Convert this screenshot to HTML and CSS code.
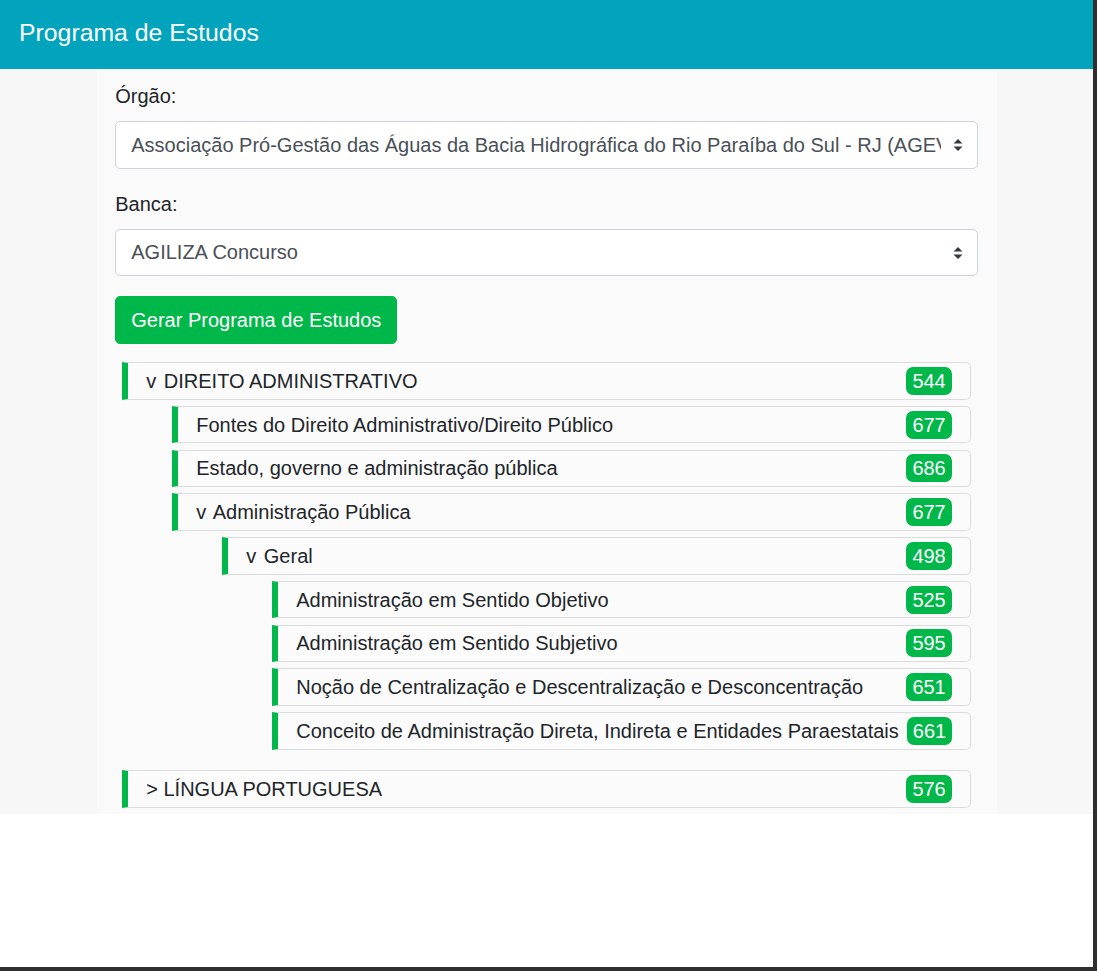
FILE: index.html
```html
<!DOCTYPE html>
<html lang="pt-BR">
<head>
<meta charset="utf-8">
<title>Programa de Estudos</title>
<link rel="stylesheet" href="styles.css">
</head>
<body>
<div class="page">
  <header class="topbar">
    <h1 class="brand">Programa de Estudos</h1>
  </header>
  <main class="section">
    <div class="container">
      <div class="form-group">
        <label class="label" for="orgao">Órgão:</label>
        <div class="select-wrap">
          <select id="orgao" class="select">
            <option>Associação Pró-Gestão das Águas da Bacia Hidrográfica do Rio Paraíba do Sul - RJ (AGEVAP)</option>
          </select>
          <svg class="select-arrow" width="10" height="14" viewBox="0 0 10 14"><path d="M5 1 L9.5 5.5 H0.5 Z M5 13 L9.5 8.5 H0.5 Z" fill="#343a40"/></svg>
        </div>
      </div>
      <div class="form-group">
        <label class="label" for="banca">Banca:</label>
        <div class="select-wrap">
          <select id="banca" class="select">
            <option>AGILIZA Concurso</option>
          </select>
          <svg class="select-arrow" width="10" height="14" viewBox="0 0 10 14"><path d="M5 1 L9.5 5.5 H0.5 Z M5 13 L9.5 8.5 H0.5 Z" fill="#343a40"/></svg>
        </div>
      </div>
      <button class="btn" type="button">Gerar Programa de Estudos</button>

      <div class="tree">
        <div class="group">
          <div class="item"><span class="item-text"><span class="chev">v</span> DIREITO ADMINISTRATIVO</span><span class="badge">544</span></div>
          <div class="children">
            <div class="item"><span class="item-text">Fontes do Direito Administrativo/Direito Público</span><span class="badge">677</span></div>
            <div class="item"><span class="item-text">Estado, governo e administração pública</span><span class="badge">686</span></div>
            <div class="item"><span class="item-text"><span class="chev">v</span> Administração Pública</span><span class="badge">677</span></div>
            <div class="children">
              <div class="item"><span class="item-text"><span class="chev">v</span> Geral</span><span class="badge">498</span></div>
              <div class="children">
                <div class="item"><span class="item-text">Administração em Sentido Objetivo</span><span class="badge">525</span></div>
                <div class="item"><span class="item-text">Administração em Sentido Subjetivo</span><span class="badge">595</span></div>
                <div class="item"><span class="item-text">Noção de Centralização e Descentralização e Desconcentração</span><span class="badge">651</span></div>
                <div class="item"><span class="item-text">Conceito de Administração Direta, Indireta e Entidades Paraestatais</span><span class="badge">661</span></div>
              </div>
            </div>
          </div>
        </div>
        <div class="group">
          <div class="item"><span class="item-text">&gt; LÍNGUA PORTUGUESA</span><span class="badge">576</span></div>
        </div>
      </div>
    </div>
  </main>
</div>
</body>
</html>
```
FILE: styles.css
```css
html {
  background: #2e2e2e;
}
body {
  margin: 0;
  font-family: "Liberation Sans", Arial, sans-serif;
  color: #212529;
}
.page {
  width: calc(100% - 4px);
  height: 967px;
  background: #ffffff;
  overflow: hidden;
}
.topbar {
  height: 69px;
  background: #01a4bc;
  display: flex;
  align-items: center;
  padding: 0 20px 3px 19px;
  box-sizing: border-box;
}
.brand {
  margin: 0;
  font-size: 24.8px;
  font-weight: 400;
  color: #ffffff;
  line-height: 30px;
}
.section {
  background: #f7f7f7;
  display: block;
}
.container {
  display: flow-root;
  width: 900px;
  margin: 0 auto;
  box-sizing: border-box;
  padding: 12px 18.75px 0;
  background: #fafafa;
}
.form-group {
  margin-bottom: 20px;
}
.label {
  display: block;
  font-size: 20px;
  line-height: 30px;
  margin-bottom: 10px;
  color: #212529;
}
.select-wrap {
  position: relative;
}
.select {
  -webkit-appearance: none;
  appearance: none;
  width: 100%;
  height: 47.5px;
  box-sizing: border-box;
  border: 1px solid #ced4da;
  border-radius: 5px;
  background: #ffffff;
  color: #495057;
  font-family: "Liberation Sans", Arial, sans-serif;
  font-size: 20px;
  padding: 0 36px 0 15px;
  outline: none;
}
.select-arrow {
  position: absolute;
  right: 15px;
  top: 17px;
  pointer-events: none;
}
.btn {
  height: 47.5px;
  padding: 0 15px;
  border: 1px solid #00b74a;
  border-radius: 5px;
  background: #00b74a;
  color: #ffffff;
  font-family: "Liberation Sans", Arial, sans-serif;
  font-size: 20px;
  line-height: 30px;
  cursor: pointer;
}
.tree {
  margin-top: 18.5px;
  padding: 0 7px;
}
.group {
  display: flow-root;
}
.group + .group {
  margin-top: 14.25px;
}
.children {
  margin-left: 50px;
}
.item {
  display: flex;
  align-items: center;
  justify-content: space-between;
  gap: 8px;
  box-sizing: border-box;
  height: 37.5px;
  margin-bottom: 6.25px;
  padding: 0 18px;
  background: #fbfbfb;
  border: 1px solid #dcdcdc;
  border-left: 6px solid #00b74a;
  border-radius: 0 5px 5px 0;
  font-size: 20px;
  line-height: 30px;
  color: #212529;
}
.item-text {
  white-space: nowrap;
}
.chev {
  margin-right: 2px;
}
.badge {
  flex: none;
  height: 28px;
  line-height: 28px;
  padding: 0 6px;
  border-radius: 7px;
  background: #00b74a;
  color: #ffffff;
  font-size: 20px;
}
```
